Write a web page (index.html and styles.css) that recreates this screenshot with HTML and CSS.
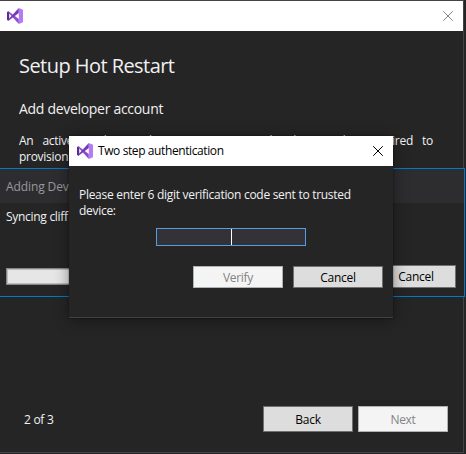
FILE: index.html
```html
<!DOCTYPE html>
<html lang="en">
<head>
<meta charset="utf-8">
<title>Setup Hot Restart</title>
<link rel="stylesheet" href="styles.css">
</head>
<body>
<svg class="defs" width="0" height="0" aria-hidden="true">
  <symbol id="vs" viewBox="0 0 16 16">
    <path fill="#5b2a94" d="M0 4 1.5 3.2 2.2 4v8L1.5 12.8 0 12z"/>
    <path fill="#8a4fd0" d="M1.5 3.2 11.8 11v5L1.5 4.8z"/>
    <path fill="#7439b8" d="M1.5 12.8 11.8 5V0L1.5 11.2z"/>
    <path fill="#b57bf5" d="M11.8 0 16 1.7v12.6L11.8 16z"/>
  </symbol>
  <symbol id="close" viewBox="0 0 10 10">
    <path d="M.2.2 9.8 9.8M9.8.2.2 9.8" fill="none" stroke="currentColor" stroke-width="1"/>
  </symbol>
</svg>
<div class="window">
  <header class="titlebar">
    <svg class="logo"><use href="#vs"/></svg>
    <svg class="close muted"><use href="#close"/></svg>
  </header>
  <main class="page">
    <h1>Setup Hot Restart</h1>
    <h2>Add developer account</h2>
    <p class="intro">An active Apple Developer Program membership is also required to</p>
    <p>provision</p>
  </main>
  <footer class="footer">
    <span class="step">2 of 3</span>
    <button class="tall">Back</button>
    <button class="tall" disabled>Next</button>
  </footer>
</div>
<section class="progress-panel">
  <div class="panel-title">Adding Dev</div>
  <div class="status">Syncing cliff</div>
  <div class="panel-actions">
    <div class="bar"></div>
    <button class="short">Cancel</button>
  </div>
</section>
<section class="dialog">
  <header class="titlebar">
    <svg class="logo"><use href="#vs"/></svg>
    <span class="dialog-title">Two step authentication</span>
    <svg class="close"><use href="#close"/></svg>
  </header>
  <p class="prompt">Please enter 6 digit verification code sent to trusted<br>device:</p>
  <div class="code"><i class="caret"></i></div>
  <div class="dialog-actions">
    <button disabled>Verify</button>
    <button>Cancel</button>
  </div>
</section>
</body>
</html>
```

FILE: styles.css
```css
* { box-sizing: border-box; }
body {
  margin: 0;
  width: 466px;
  height: 454px;
  overflow: hidden;
  position: relative;
  background: #252526;
  color: #f1f1f1;
  font: 12px/16px "Open Sans", "Noto Sans", sans-serif;
  letter-spacing: -0.29px;
}
.defs { position: absolute; }
h1, h2, p { margin: 0; font-weight: 400; }
.window {
  width: 464px;
  height: 453px;
  display: flex;
  flex-direction: column;
  border: solid #434346;
  border-width: 1px 1px 1px 0;
}
.titlebar {
  height: 30px;
  flex: none;
  display: flex;
  align-items: center;
  padding: 0 10px 0 7px;
  background: #fff;
  color: #000;
}
.logo { width: 16px; height: 16px; }
.close { width: 10px; height: 10px; margin-left: auto; }
.muted { color: #858585; }
.page { flex: 1; padding: 21px 30px 0 19px; }
h1 { font-size: 20px; line-height: 28px; letter-spacing: -0.55px; }
h2 { margin-top: 19px; font-size: 14px; line-height: 20px; letter-spacing: -0.3px; }
.intro { margin-top: 14px; text-align-last: justify; white-space: nowrap; }
.footer {
  display: flex;
  align-items: center;
  gap: 5px;
  padding: 0 15px 20px 24px;
}
.step { margin-right: auto; padding-top: 2px; }
button {
  width: 90px;
  height: 22px;
  padding: 2px 0 0;
  border: 1px solid #707070;
  background: #ddd;
  color: #000;
  font: inherit;
  letter-spacing: -0.29px;
}
button:disabled { background: #f4f4f4; border-color: #adb2b5; color: #838383; }
.tall { height: 26px; }
.short { width: 80px; height: 23px; padding-top: 0; }
.progress-panel {
  position: absolute;
  left: 0;
  top: 168px;
  width: 465px;
  height: 129px;
  border: solid #007acc;
  border-width: 1px 1px 1px 0;
  background: #252526;
}
.panel-title { height: 34px; padding: 10px 6px; background: #2d2d30; color: #999; letter-spacing: -0.1px; }
.status { padding: 6px 6px 0; height: 62px; }
.panel-actions { display: flex; align-items: center; gap: 8px; padding: 0 8px 0 6px; }
.bar { flex: 1; height: 17px; border: 1px solid #8c8585; box-shadow: inset 0 0 0 1px #bcbcbc; background: #e6e6e6; }
.dialog {
  position: absolute;
  left: 69px;
  top: 136px;
  width: 324px;
  height: 182px;
  background: #252526;
  border-bottom: 1px solid #3f3f46;
  box-shadow: 0 2px 14px rgba(0, 0, 0, .4), 0 0 1px 1px rgba(0, 0, 0, .15);
}
.dialog .titlebar { padding-left: 8px; }
.dialog-title { margin-left: 5px; letter-spacing: -0.4px; }
.prompt { padding: 21px 10px 0; }
.code {
  width: 150px;
  height: 18px;
  margin: 9px auto 0 87px;
  display: flex;
  justify-content: center;
  border: 1px solid #569de5;
  background: #333337;
}
.caret { width: 1px; background: #fff; }
.dialog-actions { display: flex; justify-content: flex-end; gap: 10px; padding: 20px 10px 0; }
```
